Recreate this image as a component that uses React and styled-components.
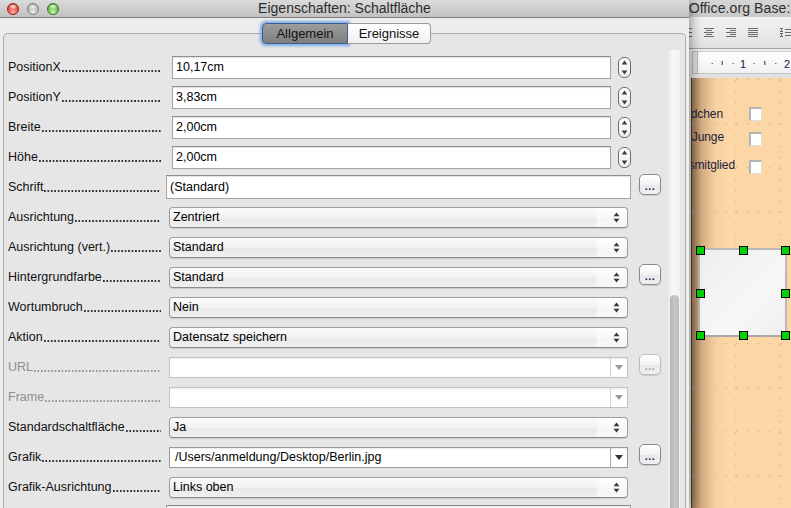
import React from 'react';
import styled, { createGlobalStyle, css } from 'styled-components';

const Global = createGlobalStyle`
  html, body { margin: 0; padding: 0; }
  body {
    width: 791px; height: 508px; overflow: hidden;
    font-family: "Liberation Sans", Arial, sans-serif;
    background: #9a9a9a;
  }
`;

const Desktop = styled.div`
  position: relative;
  width: 791px;
  height: 508px;
  overflow: hidden;
`;

/* ---------- background window (OpenOffice.org Base) ---------- */
const BgWindow = styled.div`
  position: absolute;
  left: 600px;
  top: 0;
  width: 320px;
  height: 508px;
  display: flex;
  flex-direction: column;
  background: #e4e4e4;
  z-index: 1;
`;

const BgTitle = styled.div`
  height: 17px;
  flex: none;
  display: flex;
  align-items: center;
  padding-left: 54px;
  padding-bottom: 2px;
  box-sizing: border-box;
  font-size: 14px;
  letter-spacing: 0.1px;
  color: #2e2e2e;
  white-space: nowrap;
  background: linear-gradient(#d6d6d6, #c9c9c9);
`;

const BgToolbar = styled.div`
  height: 32px;
  flex: none;
  display: flex;
  align-items: center;
  gap: 12px;
  padding-left: 82px;
  box-sizing: border-box;
  background: linear-gradient(#f2f2f2, #e2e2e2);
  border-bottom: 1px solid #a2a2a2;
`;

const ToolIcon = styled.svg`
  flex: none;
  margin-left: ${p => (p.$sep ? '10px' : '0')};
`;

const RulerRow = styled.div`
  height: 29px;
  flex: none;
  display: flex;
  align-items: flex-start;
  padding: 2px 0 0 92px;
  box-sizing: border-box;
  background: linear-gradient(#ececec, #e0e0e0);
`;

const RulerCorner = styled.div`
  width: 4px;
  height: 21px;
  border: 1px solid #b8b8b8;
  background: #dcdcdc;
  flex: none;
`;

const RulerStrip = styled.div`
  height: 23px;
  flex: 1;
  background: linear-gradient(#ffffff, #f1f1f1);
  border-top: 1px solid #cfcfcf;
  border-bottom: 1px solid #c4c4c4;
  box-sizing: border-box;
`;

const CanvasRow = styled.div`
  flex: 1;
  display: flex;
  padding-left: 91px;
  background: #e6e6e6;
`;

const Canvas = styled.div`
  position: relative;
  flex: 1;
  overflow: hidden;
  border-left: 1px solid #4e3b27;
  background-color: #fcd6a5;
  background-image:
    radial-gradient(circle at 0.5px 0.5px, rgba(175, 170, 165, 0.65) 0.7px, transparent 1.2px),
    radial-gradient(circle at 0.5px 0.5px, rgba(175, 170, 165, 0.65) 0.7px, transparent 1.2px),
    linear-gradient(90deg, #9a7655 0px, #d4ae82 10px, #f6d1a1 24px, #fcd6a5 34px);
  background-size: 44px 11px, 11px 44px, 100% 100%;
  background-position: 43px 2px, 0px 45px, 0 0;
  background-repeat: repeat, repeat, no-repeat;
`;

const CanvasLabel = styled.div`
  position: absolute;
  left: ${p => p.$right - 120}px;
  top: ${p => p.$top}px;
  width: 120px;
  text-align: right;
  font-size: 12px;
  line-height: 15px;
  letter-spacing: -0.1px;
  color: #1c1c3a;
  white-space: nowrap;
`;

const CanvasCheck = styled.div`
  position: absolute;
  left: 57px;
  top: ${p => p.$top}px;
  width: 13px;
  height: 14px;
  box-sizing: border-box;
  background: #ffffff;
  border-top: 2px solid #b4b4b4;
  border-left: 2px solid #b4b4b4;
  border-right: 1px solid #dedede;
  border-bottom: 1px solid #dedede;
`;

const FormButton = styled.div`
  position: absolute;
  left: 6px;
  top: 170px;
  width: 89px;
  height: 89px;
  box-sizing: border-box;
  border: 2px solid #b9b9b9;
  border-bottom-color: #a8a8a8;
  background: linear-gradient(135deg, #eeeeee, #f7f7f7 60%, #f0f0f0);
`;

const Handle = styled.div`
  position: absolute;
  left: calc(${p => p.$x}% - 4px);
  top: calc(${p => p.$y}% - 4px);
  width: 7px;
  height: 7px;
  background: #00d400;
  border: 1px solid #000;
`;

/* ---------- dialog ---------- */
const Dialog = styled.div`
  position: absolute;
  left: 0;
  top: 0;
  width: 689px;
  height: 508px;
  display: flex;
  flex-direction: column;
  background: #eeeeee;
  box-shadow: 1px 0 12px rgba(0, 0, 0, 0.45);
  z-index: 2;
  overflow: hidden;
`;

const TitleBar = styled.div`
  height: 17px;
  flex: none;
  display: grid;
  grid-template-columns: 1fr auto 1fr;
  align-items: center;
  background: linear-gradient(#dadada, #c2c2c2);
  border-bottom: 1px solid #7c7c7c;
`;

const Lights = styled.div`
  display: flex;
  gap: 8px;
  padding-left: 7px;
  padding-bottom: 2px;
`;

const lightColors = {
  red: ['#ffb3a8', '#e2453a', '#a01b12'],
  grey: ['#eeeeee', '#b5b5b5', '#7d7d7d'],
  green: ['#d2f5b5', '#5cba38', '#2a7d12'],
};

const Light = styled.div`
  width: 12px;
  height: 12px;
  border-radius: 50%;
  box-sizing: border-box;
  border: 1px solid ${p => lightColors[p.$c][2]};
  background:
    radial-gradient(ellipse 5px 3px at 50% 25%, rgba(255,255,255,0.9), rgba(255,255,255,0) 100%),
    radial-gradient(circle at 50% 80%, ${p => lightColors[p.$c][0]} 0%, ${p => lightColors[p.$c][1]} 60%, ${p => lightColors[p.$c][2]} 100%);
`;

const Title = styled.div`
  font-size: 14px;
  color: #2c2c2c;
  padding-bottom: 3px;
  white-space: nowrap;
`;

const Body = styled.div`
  flex: 1;
  display: flex;
  flex-direction: column;
  padding: 5px 3px 0 3px;
  min-height: 0;
`;

const TabStrip = styled.div`
  display: flex;
  justify-content: center;
  padding-left: 4px;
  margin-bottom: -11px;
  position: relative;
  z-index: 1;
`;

const Tab = styled.div`
  height: 21px;
  box-sizing: border-box;
  width: ${p => p.$w}px;
  display: flex;
  align-items: center;
  justify-content: center;
  font-size: 13px;
  color: #111;
  ${p =>
    p.$active
      ? css`
          background: linear-gradient(#9c9c9c, #7e7e7e);
          border: 1px solid #3e5f8e;
          border-radius: 4px 0 0 4px;
          box-shadow: 0 0 0 1px #8ab6ee, 0 0 3px 2px rgba(90, 150, 230, 0.75);
        `
      : css`
          background: linear-gradient(#ffffff, #f1f1f1);
          border: 1px solid #9a9a9a;
          border-left: none;
          border-radius: 0 4px 4px 0;
        `}
`;

const Panel = styled.div`
  flex: 1;
  display: flex;
  min-height: 0;
  border: 1px solid #aaaaaa;
  border-bottom: none;
  border-radius: 5px 5px 0 0;
  background: #e6e6e6;
`;

const Rows = styled.div`
  flex: 1;
  padding: 18px 0 0 4px;
  display: flex;
  flex-direction: column;
`;

const Row = styled.div`
  height: 30px;
  flex: none;
  display: grid;
  grid-template-columns: 154px 1fr;
  column-gap: 4px;
  align-items: center;
`;

const Label = styled.div`
  display: flex;
  align-items: flex-end;
  height: 15px;
  padding-right: 1px;
  font-size: 12.5px;
  line-height: 15px;
  color: ${p => (p.$disabled ? '#8e8e8e' : '#111')};
  white-space: nowrap;
  overflow: hidden;
`;

const Leader = styled.span`
  flex: 1;
  height: 2px;
  margin: 0 0 3px 1px;
  background-image: radial-gradient(circle at 0.8px 1px, ${p => (p.$disabled ? '#9a9a9a' : '#333')} 0.7px, transparent 1px);
  background-size: 3.45px 2px;
  background-repeat: repeat-x;
`;

const Cell = styled.div`
  display: flex;
  align-items: center;
`;

const fieldText = css`
  font-size: 12.5px;
  color: #000;
  white-space: nowrap;
  overflow: hidden;
`;

const TextField = styled.div`
  ${fieldText};
  box-sizing: border-box;
  margin-left: ${p => p.$ml}px;
  width: ${p => p.$w}px;
  height: ${p => p.$h}px;
  display: flex;
  align-items: center;
  padding-left: 3px;
  background: #ffffff;
  border: 1px solid #a4a4a4;
  border-top-color: #8e8e8e;
  box-shadow: inset 0 1px 1px rgba(0, 0, 0, 0.12);
`;

const Spinner = styled.svg`
  margin-left: 7px;
  flex: none;
`;

const Select = styled.div`
  ${fieldText};
  box-sizing: border-box;
  margin-left: 3px;
  width: 459px;
  height: 21px;
  display: flex;
  align-items: center;
  justify-content: space-between;
  padding: 0 7px 0 3px;
  border: 1px solid #9e9e9e;
  border-bottom-color: #8a8a8a;
  border-radius: 4px;
  background:
    linear-gradient(90deg, rgba(255,255,255,0) 0, rgba(255,255,255,0) 426px, rgba(255,255,255,0.55) 427px),
    linear-gradient(#fbfbfb, #f1f1f1 50%, #e9e9e9 51%, #efefef);
  box-shadow: 0 1px 1px rgba(0, 0, 0, 0.12);
`;

const Combo = styled.div`
  ${fieldText};
  box-sizing: border-box;
  margin-left: 3px;
  width: 459px;
  height: 21px;
  display: flex;
  align-items: stretch;
  background: #ffffff;
  border: 1px solid ${p => (p.$disabled ? '#c2c2c2' : '#9a9a9a')};
  box-shadow: inset 0 1px 1px rgba(0, 0, 0, 0.08);
`;

const ComboText = styled.div`
  flex: 1;
  display: flex;
  align-items: center;
  padding-left: 5px;
`;

const ComboArrow = styled.div`
  width: 16px;
  flex: none;
  display: flex;
  align-items: center;
  justify-content: center;
  border-left: 1px solid ${p => (p.$disabled ? '#d2d2d2' : '#a8a8a8')};
`;

const DotsButton = styled.div`
  flex: none;
  margin-left: ${p => p.$ml}px;
  margin-bottom: 5px;
  width: 22px;
  height: 21px;
  box-sizing: border-box;
  border-radius: 5px;
  border: 1px solid ${p => (p.$disabled ? '#bdbdbd' : '#8a8a8a')};
  background: linear-gradient(#ffffff, #f3f3f3 50%, #e7e7e7 51%, #f0f0f0);
  box-shadow: 0 1px 1px rgba(0, 0, 0, 0.12);
  display: flex;
  align-items: center;
  justify-content: center;
  font-size: 11px;
  font-weight: bold;
  letter-spacing: 0.5px;
  padding-top: 3px;
  color: ${p => (p.$disabled ? '#9aa0ad' : '#1d2a4d')};
`;

const ScrollCol = styled.div`
  width: 18px;
  flex: none;
  display: flex;
  flex-direction: column;
  padding-top: 16px;
  box-sizing: border-box;
`;

const ScrollTrack = styled.div`
  flex: 1;
  width: 12px;
  margin-left: 1px;
  display: flex;
  flex-direction: column;
  align-items: center;
  background: linear-gradient(90deg, #e9e9e9, #f7f7f7 40%, #f2f2f2);
`;

const ScrollThumb = styled.div`
  margin-top: 245px;
  flex: 1;
  width: 9px;
  border-radius: 5px 5px 0 0;
  background: linear-gradient(90deg, #b4b4b4, #c6c6c6 50%, #bcbcbc);
`;

/* ---------- small drawings ---------- */
const UpDown = ({ color }) => (
  <svg width="7" height="11" viewBox="0 0 7 11">
    <path d="M3.5 0.5 L6.5 4.2 L0.5 4.2 Z M0.5 6.8 L6.5 6.8 L3.5 10.5 Z" fill={color} />
  </svg>
);

const DownArrow = ({ color }) => (
  <svg width="8" height="5" viewBox="0 0 8 5">
    <path d="M0 0 L8 0 L4 5 Z" fill={color} />
  </svg>
);

const SpinnerIcon = () => (
  <Spinner width="13" height="21" viewBox="0 0 13 21">
    <defs>
      <linearGradient id="spg" x1="0" y1="0" x2="0" y2="1">
        <stop offset="0" stopColor="#ffffff" />
        <stop offset="1" stopColor="#ececec" />
      </linearGradient>
    </defs>
    <rect x="0.5" y="0.5" width="12" height="20" rx="5.5" fill="url(#spg)" stroke="#6c6c6c" />
    <path d="M6.5 3.5 L9.3 7.6 L3.7 7.6 Z" fill="#3d3d3d" />
    <path d="M3.7 13.4 L9.3 13.4 L6.5 17.5 Z" fill="#3d3d3d" />
  </Spinner>
);

const AlignIcon = ({ align, sep }) => {
  const widths = align === 'justify' ? [10, 10, 10, 10, 10] : [10, 6, 10, 6, 10];
  return (
    <ToolIcon $sep={sep} width="10" height="9" viewBox="0 0 10 9">
      {widths.map((w, i) => {
        const x = align === 'left' || align === 'justify' ? 0 : align === 'right' ? 10 - w : (10 - w) / 2;
        return <rect key={i} x={x} y={i * 2} width={w} height="1" fill="#6b6b6b" />;
      })}
    </ToolIcon>
  );
};

const SpacingIcon = () => (
  <ToolIcon $sep width="11" height="9" viewBox="0 0 11 9">
    <rect x="0" y="0" width="3" height="1" fill="#6b6b6b" />
    <rect x="1" y="0" width="1" height="3" fill="#6b6b6b" />
    <rect x="0" y="3" width="3" height="1" fill="#6b6b6b" />
    <rect x="0" y="5" width="3" height="1" fill="#6b6b6b" />
    <rect x="1" y="5" width="1" height="3" fill="#6b6b6b" />
    <rect x="0" y="8" width="3" height="1" fill="#6b6b6b" />
    <rect x="5" y="1" width="6" height="1" fill="#6b6b6b" />
    <rect x="5" y="4" width="6" height="1" fill="#6b6b6b" />
    <rect x="5" y="7" width="6" height="1" fill="#6b6b6b" />
  </ToolIcon>
);

const RulerMarks = () => {
  const dots = [13.7, 34.7, 55.7, 77.3, 99.7];
  const ticks = [23.7, 66.3];
  return (
    <svg width="200" height="21" viewBox="0 0 200 21">
      {dots.map(x => (
        <rect key={x} x={x} y="11" width="1" height="1" fill="#333" />
      ))}
      {ticks.map(x => (
        <rect key={x} x={x} y="9" width="1" height="4" fill="#333" />
      ))}
      <text x="45" y="16" fontSize="11" fill="#141850" textAnchor="middle" fontFamily="Liberation Sans, Arial, sans-serif">1</text>
      <text x="89" y="16" fontSize="11" fill="#141850" textAnchor="middle" fontFamily="Liberation Sans, Arial, sans-serif">2</text>
    </svg>
  );
};

/* ---------- data ---------- */
const rows = [
  { label: 'PositionX', kind: 'num', value: '10,17cm' },
  { label: 'PositionY', kind: 'num', value: '3,83cm' },
  { label: 'Breite', kind: 'num', value: '2,00cm' },
  { label: 'Höhe', kind: 'num', value: '2,00cm' },
  { label: 'Schrift', kind: 'wide', value: '(Standard)', button: true },
  { label: 'Ausrichtung', kind: 'select', value: 'Zentriert' },
  { label: 'Ausrichtung (vert.)', kind: 'select', value: 'Standard' },
  { label: 'Hintergrundfarbe', kind: 'select', value: 'Standard', button: true },
  { label: 'Wortumbruch', kind: 'select', value: 'Nein' },
  { label: 'Aktion', kind: 'select', value: 'Datensatz speichern' },
  { label: 'URL', kind: 'combo', value: '', disabled: true, button: true },
  { label: 'Frame', kind: 'combo', value: '', disabled: true },
  { label: 'Standardschaltfläche', kind: 'select', value: 'Ja' },
  { label: 'Grafik', kind: 'combo', value: '/Users/anmeldung/Desktop/Berlin.jpg', button: true },
  { label: 'Grafik-Ausrichtung', kind: 'select', value: 'Links oben' },
  { label: 'Hilfetext', kind: 'wide', value: '' },
];

function Control({ row }) {
  switch (row.kind) {
    case 'num':
      return (
        <>
          <TextField $ml={6} $w={439} $h={23}>{row.value}</TextField>
          <SpinnerIcon />
        </>
      );
    case 'wide':
      return (
        <>
          <TextField $ml={0} $w={465} $h={24}>{row.value}</TextField>
          {row.button && <DotsButton $ml={8}>...</DotsButton>}
        </>
      );
    case 'select':
      return (
        <>
          <Select>
            <span>{row.value}</span>
            <UpDown color="#3a3a3a" />
          </Select>
          {row.button && <DotsButton $ml={11}>...</DotsButton>}
        </>
      );
    case 'combo':
      return (
        <>
          <Combo $disabled={row.disabled}>
            <ComboText>{row.value}</ComboText>
            <ComboArrow $disabled={row.disabled}>
              <DownArrow color={row.disabled ? '#9a9a9a' : '#333333'} />
            </ComboArrow>
          </Combo>
          {row.button && <DotsButton $ml={11} $disabled={row.disabled}>...</DotsButton>}
        </>
      );
    default:
      return null;
  }
}

export default function App() {
  return (
    <Desktop>
      <Global />
      <BgWindow>
        <BgTitle>OpenOffice.org Base:</BgTitle>
        <BgToolbar>
          <AlignIcon align="left" />
          <AlignIcon align="center" />
          <AlignIcon align="right" />
          <AlignIcon align="justify" />
          <SpacingIcon />
        </BgToolbar>
        <RulerRow>
          <RulerCorner />
          <RulerStrip>
            <RulerMarks />
          </RulerStrip>
        </RulerRow>
        <CanvasRow>
          <Canvas>
            <CanvasLabel $right={31} $top={29}>Mädchen</CanvasLabel>
            <CanvasLabel $right={32} $top={52}>Junge</CanvasLabel>
            <CanvasLabel $right={43} $top={80}>Vereinsmitglied</CanvasLabel>
            <CanvasCheck $top={29} />
            <CanvasCheck $top={54} />
            <CanvasCheck $top={82} />
            <FormButton>
              {[[0, 0], [50, 0], [100, 0], [0, 50], [100, 50], [0, 100], [50, 100], [100, 100]].map(([x, y]) => (
                <Handle key={`${x}-${y}`} $x={x} $y={y} />
              ))}
            </FormButton>
          </Canvas>
        </CanvasRow>
      </BgWindow>

      <Dialog>
        <TitleBar>
          <Lights>
            <Light $c="red" />
            <Light $c="grey" />
            <Light $c="green" />
          </Lights>
          <Title>Eigenschaften: Schaltfläche</Title>
          <div />
        </TitleBar>
        <Body>
          <TabStrip>
            <Tab $active $w={86}>Allgemein</Tab>
            <Tab $w={83}>Ereignisse</Tab>
          </TabStrip>
          <Panel>
            <Rows>
              {rows.map(r => (
                <Row key={r.label}>
                  <Label $disabled={r.disabled}>
                    <span>{r.label}</span>
                    <Leader $disabled={r.disabled} />
                  </Label>
                  <Cell>
                    <Control row={r} />
                  </Cell>
                </Row>
              ))}
            </Rows>
            <ScrollCol>
              <ScrollTrack>
                <ScrollThumb />
              </ScrollTrack>
            </ScrollCol>
          </Panel>
        </Body>
      </Dialog>
    </Desktop>
  );
}
